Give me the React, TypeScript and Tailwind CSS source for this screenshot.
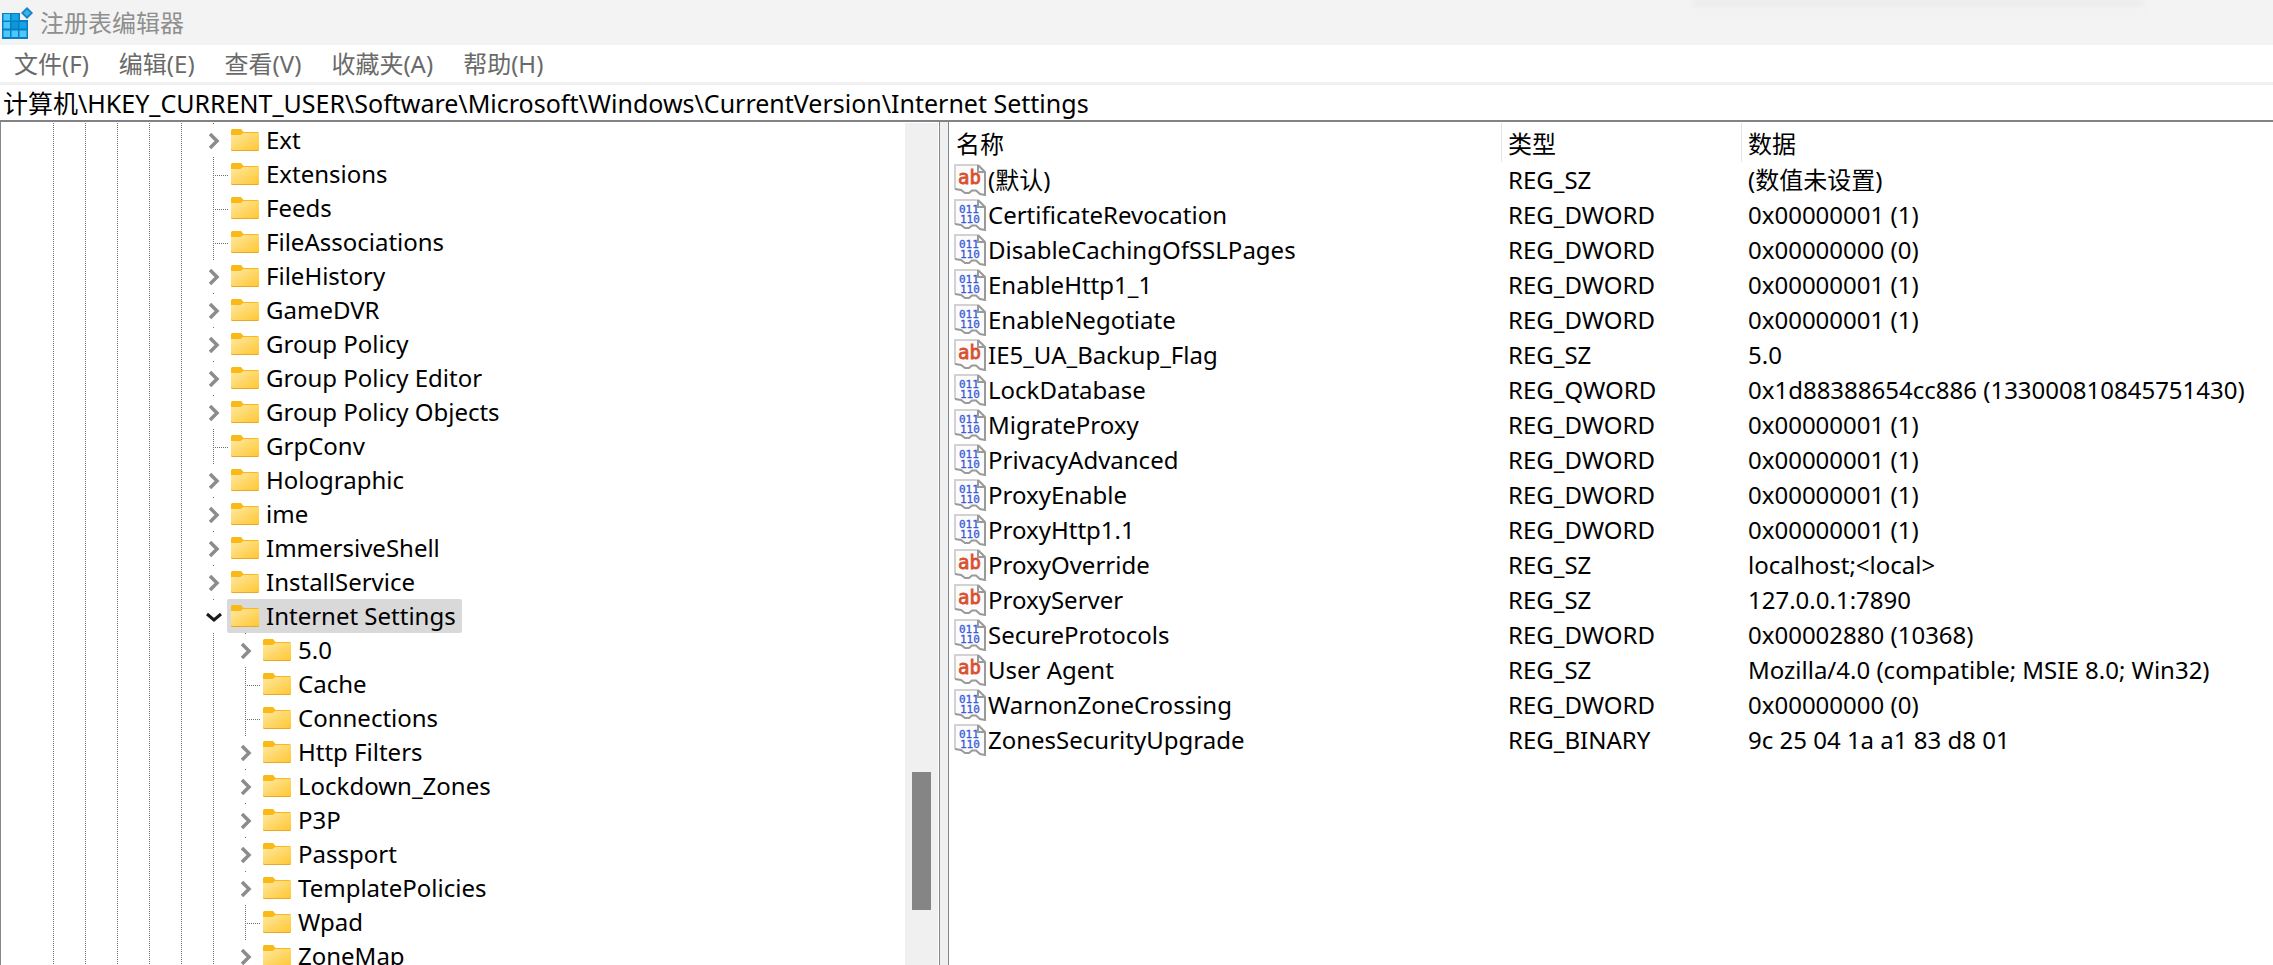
import React from "react";

type Kind = "sz" | "bin";
type TreeNode = { name: string; level: 0 | 1; expandable?: boolean; open?: boolean };

const tree: TreeNode[] = [
  { name: "Ext", level: 0, expandable: true },
  { name: "Extensions", level: 0 },
  { name: "Feeds", level: 0 },
  { name: "FileAssociations", level: 0 },
  { name: "FileHistory", level: 0, expandable: true },
  { name: "GameDVR", level: 0, expandable: true },
  { name: "Group Policy", level: 0, expandable: true },
  { name: "Group Policy Editor", level: 0, expandable: true },
  { name: "Group Policy Objects", level: 0, expandable: true },
  { name: "GrpConv", level: 0 },
  { name: "Holographic", level: 0, expandable: true },
  { name: "ime", level: 0, expandable: true },
  { name: "ImmersiveShell", level: 0, expandable: true },
  { name: "InstallService", level: 0, expandable: true },
  { name: "Internet Settings", level: 0, expandable: true, open: true },
  { name: "5.0", level: 1, expandable: true },
  { name: "Cache", level: 1 },
  { name: "Connections", level: 1 },
  { name: "Http Filters", level: 1, expandable: true },
  { name: "Lockdown_Zones", level: 1, expandable: true },
  { name: "P3P", level: 1, expandable: true },
  { name: "Passport", level: 1, expandable: true },
  { name: "TemplatePolicies", level: 1, expandable: true },
  { name: "Wpad", level: 1 },
  { name: "ZoneMap", level: 1, expandable: true },
];

const values: [Kind, string, string, string][] = [
  ["sz", "(默认)", "REG_SZ", "(数值未设置)"],
  ["bin", "CertificateRevocation", "REG_DWORD", "0x00000001 (1)"],
  ["bin", "DisableCachingOfSSLPages", "REG_DWORD", "0x00000000 (0)"],
  ["bin", "EnableHttp1_1", "REG_DWORD", "0x00000001 (1)"],
  ["bin", "EnableNegotiate", "REG_DWORD", "0x00000001 (1)"],
  ["sz", "IE5_UA_Backup_Flag", "REG_SZ", "5.0"],
  ["bin", "LockDatabase", "REG_QWORD", "0x1d88388654cc886 (133000810845751430)"],
  ["bin", "MigrateProxy", "REG_DWORD", "0x00000001 (1)"],
  ["bin", "PrivacyAdvanced", "REG_DWORD", "0x00000001 (1)"],
  ["bin", "ProxyEnable", "REG_DWORD", "0x00000001 (1)"],
  ["bin", "ProxyHttp1.1", "REG_DWORD", "0x00000001 (1)"],
  ["sz", "ProxyOverride", "REG_SZ", "localhost;<local>"],
  ["sz", "ProxyServer", "REG_SZ", "127.0.0.1:7890"],
  ["bin", "SecureProtocols", "REG_DWORD", "0x00002880 (10368)"],
  ["sz", "User Agent", "REG_SZ", "Mozilla/4.0 (compatible; MSIE 8.0; Win32)"],
  ["bin", "WarnonZoneCrossing", "REG_DWORD", "0x00000000 (0)"],
  ["bin", "ZonesSecurityUpgrade", "REG_BINARY", "9c 25 04 1a a1 83 d8 01"],
];

const menus = ["文件(F)", "编辑(E)", "查看(V)", "收藏夹(A)", "帮助(H)"];

function AppIcon() {
  return (
    <svg width="32" height="32" viewBox="0 0 32 32" className="shrink-0" aria-hidden="true">
      <path d="M0 6h18v7h8v19H0z" fill="#0a7cc4" />
      <path d="M1.500 7h6.500v6.500H1.500zM1.500 15h6.500v6.500H1.500zM1.500 23.500h6.500v6.500H1.500zM9.500 23.500h6.500v6.500H9.500zM17.500 23.500h7v6.500h-7z" fill="#4cc9fb" />
      <path d="M9.500 7h7v6.500h-7zM17.500 15h7v6.500h-7z" fill="#16a5e4" />
      <path d="M9.500 15h6.500v6.500H9.500z" fill="#0a98d8" />
      <path d="M25 0l6 6-6 6-6-6z" fill="#1583c6" />
      <path d="M25 2.500l3.500 3.500-3.500 3.500-3.500-3.500z" fill="#3bb2ec" />
    </svg>
  );
}

function Folder() {
  return (
    <svg width="28" height="22" viewBox="0 0 28 22" className="shrink-0" aria-hidden="true">
      <defs>
        <linearGradient id="folder" x1="0" y1="0" x2="1" y2="1">
          <stop offset="0" stopColor="#ffe8a3" />
          <stop offset="1" stopColor="#ffc832" />
        </linearGradient>
      </defs>
      <path d="M0 1.500Q0 0 1.500 0H10l2.500 3H26.500Q28 3 28 4.500V8H0z" fill="#fbb917" />
      <path d="M0 6H9.500L12 4H28V20.500Q28 22 26.500 22H1.500Q0 22 0 20.500z" fill="#e9a924" />
      <path d="M0 6H9.500L12 4H28V19.500Q28 21 26.500 21H1.500Q0 21 0 19.500z" fill="url(#folder)" />
    </svg>
  );
}

function ValueIcon({ kind }: { kind: Kind }) {
  return (
    <svg width="32" height="32" viewBox="0 0 32 32" className="shrink-0" aria-hidden="true">
      <path d="M1 1H24L31 8V31L26 30L22 26.500H18L15 29H11L7 26L1 25z" fill="#fbfbfb" />
      <path d="M1 25V1H24" fill="none" stroke="#d2d2d2" strokeWidth="2" />
      <path d="M24 1L31 8V31L26 30L22 26.500H18L15 29H11L7 26L1 25M24 1V8H31" fill="none" stroke="#9a9a9a" strokeWidth="2" />
      {kind === "sz" ? (
        <text x="4" y="20" fontSize="19" fill="#d9502e" stroke="#d9502e" strokeWidth="0.8" fontFamily="DejaVu Sans Mono, monospace">ab</text>
      ) : (
        <g fontSize="11" fill="#3a5bd9" stroke="#3a5bd9" strokeWidth="0.3" fontFamily="DejaVu Sans Mono, monospace">
          <text x="5" y="14">011</text>
          <text x="6" y="24">110</text>
        </g>
      )}
    </svg>
  );
}

function Chevron({ open }: { open?: boolean }) {
  return open ? (
    <svg width="18" height="12" viewBox="0 0 18 12" aria-hidden="true">
      <path d="M2 3l7 6 7-6" fill="none" stroke="#1a1a1a" strokeWidth="3" />
    </svg>
  ) : (
    <svg width="12" height="18" viewBox="0 0 12 18" aria-hidden="true">
      <path d="M2 2l7 7-7 7" fill="none" stroke="#8c8c8c" strokeWidth="3.500" />
    </svg>
  );
}

/* A 32px wide indent column with a dotted guide down the middle, and a branch to the item if it is a leaf. */
function Guide({ branch }: { branch?: boolean }) {
  return (
    <span className="grid w-8 shrink-0 grid-cols-[15px_1px_1fr] self-stretch">
      <span />
      <span className="bg-[repeating-linear-gradient(to_bottom,#6e6e6e_0_1px,transparent_1px_2px)]" />
      {branch && (
        <span className="mt-[18px] mr-0.5 h-px bg-[repeating-linear-gradient(to_right,transparent_0_1px,#6e6e6e_1px_2px)]" />
      )}
    </span>
  );
}

function TreeRow({ node }: { node: TreeNode }) {
  const guides = node.level === 0 ? 5 : 6;
  return (
    <li
      role="treeitem"
      aria-selected={!!node.open}
      aria-expanded={node.expandable ? !!node.open : undefined}
      className="flex h-[34px] shrink-0 items-center pl-[37px]"
    >
      {Array.from({ length: guides }, (_, i) => (
        <Guide key={i} />
      ))}
      {node.expandable ? (
        <button aria-label={node.name} className="grid w-8 shrink-0 grid-rows-[1px_1fr] justify-items-center self-stretch pr-px">
          <span className="size-px bg-[#6e6e6e]" />
          <span className="flex items-center pt-px">
            <Chevron open={node.open} />
          </span>
        </button>
      ) : (
        <Guide branch />
      )}
      <span className={"-ml-[3px] flex h-full items-center gap-[7px] rounded-xs pr-1.5 pl-1 " + (node.open ? "bg-[#d9d9d9]" : "")}>
        <Folder />
        <span className="whitespace-nowrap">{node.name}</span>
      </span>
    </li>
  );
}

export default function App() {
  return (
    <div className="flex h-screen flex-col overflow-hidden bg-white font-['Noto_Sans','Noto_Sans_CJK_SC',sans-serif] text-[24px] leading-8 text-black">
      <header className="flex h-[45px] shrink-0 items-center justify-between bg-[#f3f3f3] pl-[2px]">
        <div className="flex items-center gap-1.5">
          <AppIcon />
          <h1 className="text-[#8f8f8f]">注册表编辑器</h1>
        </div>
        <div className="mr-[130px] h-3 w-[450px] self-start bg-linear-to-b from-[#ebebeb] to-[#f3f3f3] blur-[2px]" />
      </header>
      <nav className="flex h-[37px] shrink-0 items-center gap-[30px] pl-[14px] text-[#6a6a6a]">
        {menus.map((m) => (
          <button key={m} className="whitespace-nowrap">{m}</button>
        ))}
      </nav>
      <div className="shrink-0 border-t-3 border-b-2 border-t-[#f0f0f0] border-b-[#828287]">
        <input
          aria-label="地址"
          className="block h-[35px] w-full pb-0.5 pl-[3px] text-[25px] outline-none"
          defaultValue="计算机\HKEY_CURRENT_USER\Software\Microsoft\Windows\CurrentVersion\Internet Settings"
        />
      </div>
      <main className="flex min-h-0 flex-1">
        <section className="flex w-[940px] shrink-0 border-x border-[#828790]">
          <ul role="tree" aria-label="注册表项" className="flex min-w-0 flex-1 flex-col overflow-hidden pt-px">
            {tree.map((n) => (
              <TreeRow key={n.name} node={n} />
            ))}
          </ul>
          <div className="mt-px mr-px flex w-[33px] flex-col items-center bg-[#f0f0f0]">
            <div className="flex-[649]" />
            <div className="w-[19px] flex-[138] bg-[#858585]" />
            <div className="flex-[55]" />
          </div>
        </section>
        <div className="w-2 shrink-0 bg-[#f0f0f0]" />
        <section className="min-w-0 flex-1 overflow-hidden border-l border-[#828790] pt-px">
          <table className="w-full table-fixed border-separate border-spacing-0 text-left">
            <colgroup>
              <col className="w-[553px]" />
              <col className="w-[240px]" />
              <col />
            </colgroup>
            <thead>
              <tr className="h-[39px]">
                <th className="border-r border-[#e5e5e5] p-0 pt-0.5 pl-[7px] font-normal">名称</th>
                <th className="border-r border-[#e5e5e5] p-0 pt-0.5 pl-[6px] font-normal">类型</th>
                <th className="p-0 pt-0.5 pl-[6px] font-normal">数据</th>
              </tr>
            </thead>
            <tbody>
              {values.map(([kind, name, type, data]) => (
                <tr key={name} className="h-[35px]">
                  <td className="p-0 pl-[5px]">
                    <span className="flex items-center gap-[2px]">
                      <ValueIcon kind={kind} />
                      <span className="whitespace-nowrap">{name}</span>
                    </span>
                  </td>
                  <td className="p-0 pl-[6px]">{type}</td>
                  <td className="p-0 pl-[6px] whitespace-nowrap">{data}</td>
                </tr>
              ))}
            </tbody>
          </table>
        </section>
      </main>
    </div>
  );
}
